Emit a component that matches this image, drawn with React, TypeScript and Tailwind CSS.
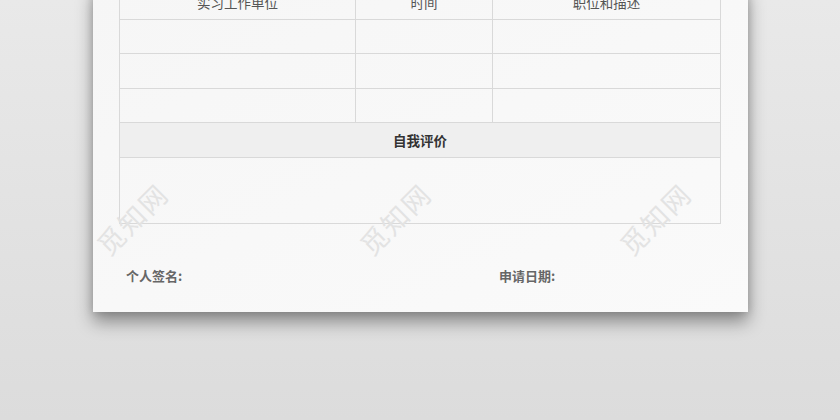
const FONT = { fontFamily: '"Noto Sans CJK SC", "Noto Sans", sans-serif' };

const rows = [0, 1, 2];
const marks = ["-left-[4px]", "left-[259px]", "left-[519px]"];

export default function App() {
  return (
    <div
      className="w-[840px] h-[420px] overflow-hidden bg-gradient-to-b from-[#e9e9e9] to-[#dcdcdc] pl-[93px]"
      style={FONT}
    >
      {/* 纸张 */}
      <div className="relative w-[655px] h-[327px] -mt-[15px] bg-gradient-to-br from-[#f6f6f6] to-[#fafafa] shadow-[0_10px_16px_rgba(0,0,0,0.38),0_0_8px_rgba(0,0,0,0.15)] pl-[26px] pr-[28px] overflow-visible">
        <table className="w-[601px] border-collapse table-fixed text-[13.5px]">
          <colgroup>
            <col className="w-[236px]" />
            <col className="w-[137px]" />
            <col className="w-[228px]" />
          </colgroup>
          <tbody>
            <tr className="h-[34px]">
              <td className="border border-[#d9d9d9] text-center text-[#555]">实习工作单位</td>
              <td className="border border-[#d9d9d9] text-center text-[#555]">时间</td>
              <td className="border border-[#d9d9d9] text-center text-[#555]">职位和描述</td>
            </tr>
            {rows.map((r) => (
              <tr key={r} className={r === 1 ? "h-[35px]" : "h-[34px]"}>
                <td className="border border-[#d9d9d9]" />
                <td className="border border-[#d9d9d9]" />
                <td className="border border-[#d9d9d9]" />
              </tr>
            ))}
            <tr className="h-[35px]">
              <td colSpan={3} className="border border-[#d9d9d9] bg-[#efefef] text-center font-bold text-[#333]">
                自我评价
              </td>
            </tr>
            <tr className="h-[66px]">
              <td colSpan={3} className="border border-[#d9d9d9]" />
            </tr>
          </tbody>
        </table>

        {/* 签名 */}
        <div className="flex mt-[42px] pl-[7px] text-[13px] font-bold text-[#666]">
          <span className="w-[373px]">个人签名:</span>
          <span>申请日期:</span>
        </div>

        {/* 水印 */}
        {marks.map((m) => (
          <div
            key={m}
            className={`absolute top-[214px] ${m} -rotate-45 whitespace-nowrap text-[27px] tracking-[2px] text-[#e3e3e3] pointer-events-none`}
          >
            觅知网
          </div>
        ))}
      </div>
    </div>
  );
}
